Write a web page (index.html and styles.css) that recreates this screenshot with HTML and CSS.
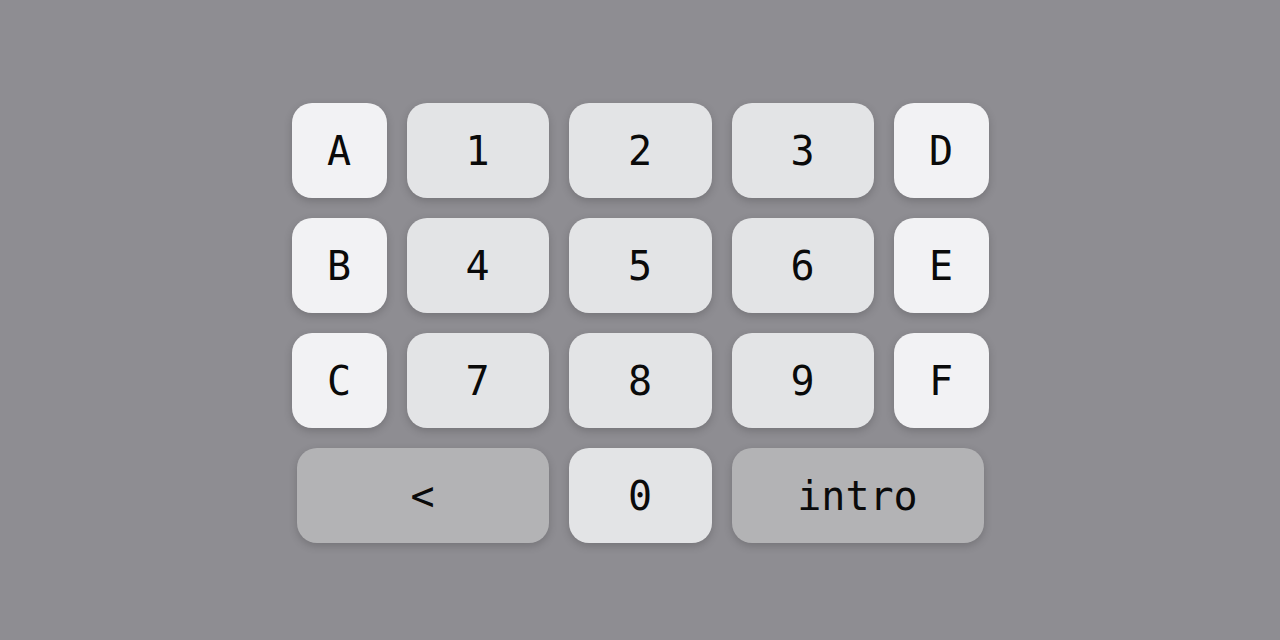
FILE: index.html
```html
<!DOCTYPE html>
<html>
<head>
  <meta charset="utf-8">
  <link rel="stylesheet" href="styles.css">
</head>
<body>
  <div class="keypad">
    <button class="key letter">A</button>
    <button class="key digit">1</button>
    <button class="key digit">2</button>
    <button class="key digit">3</button>
    <button class="key letter">D</button>

    <button class="key letter">B</button>
    <button class="key digit">4</button>
    <button class="key digit">5</button>
    <button class="key digit">6</button>
    <button class="key letter">E</button>

    <button class="key letter">C</button>
    <button class="key digit">7</button>
    <button class="key digit">8</button>
    <button class="key digit">9</button>
    <button class="key letter">F</button>

    <button class="key action back">&lt;</button>
    <button class="key digit">0</button>
    <button class="key action enter">intro</button>
  </div>
</body>
</html>
```

FILE: styles.css
```css
html, body {
  margin: 0;
  padding: 0;
  height: 100%;
}

body {
  background-color: #8e8d92;
  display: flex;
  justify-content: center;
  padding-top: 103px;
  box-sizing: border-box;
}

.keypad {
  display: grid;
  grid-template-columns: 95px 142px 143px 142px 95px;
  grid-auto-rows: 95px;
  gap: 20px;
  align-self: flex-start;
}

.key {
  border: none;
  border-radius: 20px;
  font-family: "DejaVu Sans Mono", monospace;
  font-size: 40px;
  color: #0a0a0a;
  padding: 0;
  display: flex;
  align-items: center;
  justify-content: center;
  box-shadow: 0 3px 9px rgba(0, 0, 0, 0.18);
  cursor: pointer;
}

.letter {
  background-color: #f2f2f4;
}

.digit {
  background-color: #e3e4e6;
}

.action {
  background-color: #b3b3b5;
}

/* bottom row: the wide keys sit a bit inside the outer columns */
.back {
  grid-column: 1 / span 2;
  margin-left: 5px;
}

.enter {
  grid-column: 4 / span 2;
  margin-right: 5px;
}
```
